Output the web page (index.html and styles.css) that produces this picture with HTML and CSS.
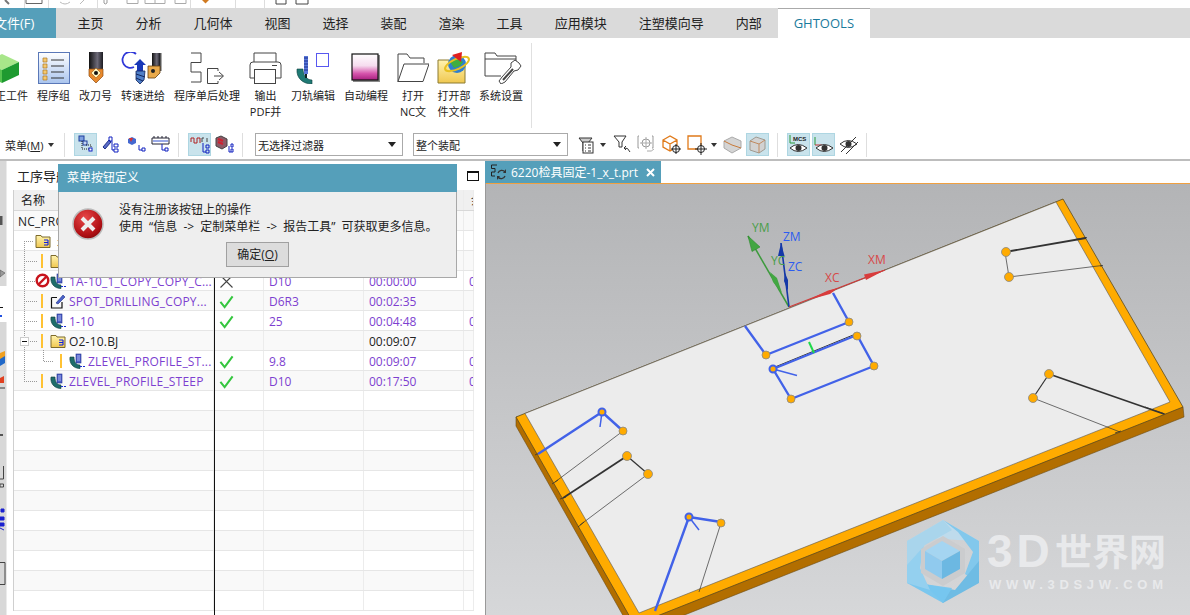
FILE: index.html
```html
<!DOCTYPE html>
<html lang="zh-CN">
<head>
<meta charset="utf-8">
<title>GHTOOLS</title>
<link rel="stylesheet" href="styles.css">
</head>
<body>
<svg class="sprite" width="0" height="0">
<defs>
<linearGradient id="gList" x1="0" y1="0" x2="0" y2="1"><stop offset="0" stop-color="#fff"/><stop offset="1" stop-color="#a9c4ee"/></linearGradient>
<linearGradient id="gTool" x1="0" y1="0" x2="1" y2="0"><stop offset="0" stop-color="#111"/><stop offset=".6" stop-color="#6d6a78"/><stop offset="1" stop-color="#1a1a20"/></linearGradient>
<linearGradient id="gPink" x1="0" y1="0" x2="0" y2="1"><stop offset="0" stop-color="#fff"/><stop offset=".45" stop-color="#f6dcef"/><stop offset=".75" stop-color="#d655ac"/><stop offset="1" stop-color="#a81f80"/></linearGradient>
<linearGradient id="gFolder" x1="0" y1="0" x2="0" y2="1"><stop offset="0" stop-color="#fff3b0"/><stop offset="1" stop-color="#f0c850"/></linearGradient>
<radialGradient id="gErr" cx=".4" cy=".3" r=".8"><stop offset="0" stop-color="#e8484a"/><stop offset=".7" stop-color="#b01014"/><stop offset="1" stop-color="#7a0508"/></radialGradient>
<linearGradient id="gView" x1="0" y1="0" x2="0" y2="1"><stop offset="0" stop-color="#b3b4b6"/><stop offset="1" stop-color="#d6d7d9"/></linearGradient>
<symbol id="opIcon" viewBox="0 0 16 16">
<path d="M1 4 C0 10 4 15.500 11 15.500 L11 12 C7 12 5 9 5 4Z" fill="#1f6d6a" stroke="#0d3b3a" stroke-width=".6"/>
<rect x="7" y="1" width="5" height="9" fill="#5060c8" stroke="#1d2f8c" stroke-width=".6"/>
<path d="M8 3h3M8 5h3M8 7h3" stroke="#cfd8ff" stroke-width=".7"/>
<path d="M11 13.500h5" stroke="#1a2fd0" stroke-width="1.200" stroke-dasharray="2 1"/>
</symbol>
<symbol id="drillIcon" viewBox="0 0 16 16">
<path d="M1.500 4.500H7M1.500 4.500V15H12V9" fill="none" stroke="#111" stroke-width="1.200"/>
<path d="M6 10 L13 2 L15 4 L8 11Z" fill="#4a62c8" stroke="#1f2f88" stroke-width=".6"/>
</symbol>
<symbol id="folderIcon" viewBox="0 0 16 16">
<path d="M1 2.500H6L7 4H15V14.500H1Z" fill="url(#gFolder)" stroke="#7d6a2a"/>
<path d="M9 7h4M9 9.500h4M9 12h4M13 7v5" stroke="#1020e0" stroke-width="1.100" fill="none"/>
</symbol>
<symbol id="check" viewBox="0 0 16 16"><path d="M1.500 8.500 L6 14 L14.500 2.500" fill="none" stroke="#35c63f" stroke-width="2.200"/></symbol>
<symbol id="tree" viewBox="0 0 23 23">
<rect x="5" y="3" width="5" height="5" fill="#7da0e0" stroke="#1f3f9c"/>
<rect x="9" y="8" width="4" height="4" fill="#c4d4f0" stroke="#1f3f9c"/>
<path d="M8 8v8h7M12 12h5v6" fill="none" stroke="#222" stroke-dasharray="1 1"/>
<rect x="15" y="15" width="3" height="3" fill="#fff" stroke="#1020c0"/>
</symbol>
</defs>
</svg>

<div class="app">
  <div class="quick">
    <svg class="quick-icons" width="320" height="8" viewBox="0 0 320 8">
      <path d="M5 0l4 4" stroke="#777" stroke-width="2"/>
      <path d="M24.500 0v8M48.500 0v8M97.500 0v8M190.500 0v8M235.500 0v8M264.500 0v8" stroke="#ddd"/>
      <path d="M26 0v3.500h16V0" fill="none" stroke="#666"/>
      <path d="M60 2q5 4 10 0M80 4l4-4" fill="none" stroke="#bbb"/>
      <path d="M104 0v3q1 2 3 0V0" fill="none" stroke="#999"/>
      <path d="M127 0v3.500h11V0M145 0v3.500h20V0M155 0v3.500M175 0v3.500h11V0" fill="none" stroke="#aaa"/>
      <path d="M202 0h7l-3.500 3.500z" fill="#d07a20"/>
      <path d="M276 0v4h10V0M296 0v4h12V0" fill="none" stroke="#444"/>
    </svg>
  </div>

  <nav class="tabs">
    <div class="tab tab-file">文件(F)</div>
    <div class="tab tab-first">主页</div>
    <div class="tab">分析</div>
    <div class="tab">几何体</div>
    <div class="tab">视图</div>
    <div class="tab">选择</div>
    <div class="tab">装配</div>
    <div class="tab">渲染</div>
    <div class="tab">工具</div>
    <div class="tab">应用模块</div>
    <div class="tab">注塑模向导</div>
    <div class="tab">内部</div>
    <div class="tab tab-active">GHTOOLS</div>
  </nav>

  <section class="ribbon">
    <div class="rb-group">
      <div class="rb-item rb-lead">
        <svg class="rb-icon" width="38" height="32" viewBox="4 0 38 32">
          <path d="M19 2L36 10 19 18 2 10Z" fill="#a8e68a"/>
          <path d="M2 10L19 18V31L2 23Z" fill="#55c34f"/>
          <path d="M36 10L19 18V31L36 23Z" fill="#1e9a30"/>
        </svg>
        <span>校正工件</span>
      </div>
      <div class="rb-item">
        <svg class="rb-icon" width="32" height="32" viewBox="0 0 32 32">
          <rect x=".5" y=".5" width="31" height="31" fill="url(#gList)" stroke="#5a78b8"/>
          <path d="M5 6h4v4H5zM5 12h4v4H5zM5 18h4v4H5zM5 24h4v4H5z" fill="#f4c870" stroke="#b07a20" stroke-width=".7"/>
          <path d="M13 8h13M13 14h13M13 20h13M13 26h13" stroke="#333"/>
        </svg>
        <span>程序组</span>
      </div>
      <div class="rb-item">
        <svg class="rb-icon" width="32" height="32" viewBox="0 0 32 32">
          <rect x="9" y="0" width="14" height="17" fill="url(#gTool)"/>
          <path d="M9 17H23V24L16 31 9 24Z" fill="#e8892c" stroke="#8c4b10" stroke-width=".7"/>
          <path d="M16 16l5 5-5 5-5-5z" fill="#fff4c0" stroke="#a05a10" stroke-width=".6"/>
          <circle cx="16" cy="21" r="2" fill="#111"/>
        </svg>
        <span>改刀号</span>
      </div>
      <div class="rb-item">
        <svg class="rb-icon" width="44" height="32" viewBox="0 0 44 32">
          <path d="M15 2A8 8 0 1 0 13 15" fill="none" stroke="#3038d8" stroke-width="1.800"/>
          <path d="M19 7l6 6h-3v6h-6v-6h-3z" fill="#1838b8"/>
          <path d="M15 19h9l-1 9-4 4-4-4z" fill="#4f7fc8" stroke="#12245c" stroke-width=".8"/>
          <path d="M15 22l9 3M15 26l7 3" stroke="#12245c"/>
          <rect x="31" y="1" width="8" height="13" fill="url(#gTool)"/>
          <rect x="39" y="1" width="1.500" height="18" fill="#555"/>
          <path d="M27 14h12v7l-5 5h-7z" fill="#e9a94a" stroke="#664010" stroke-width=".8"/>
          <circle cx="32" cy="19" r="2" fill="#222"/>
        </svg>
        <span>转速进给</span>
      </div>
      <div class="rb-item">
        <svg class="rb-icon" width="66" height="32" viewBox="0 0 66 32">
          <path d="M17 1H27V10.500H17V20H27V30H17" fill="none" stroke="#444"/>
          <path d="M44 16.500H33.500V31.500H44M44 16.500V19M44 31.500V29" fill="none" stroke="#444"/>
          <path d="M40 24H49M45 20L49.500 24 45 28" fill="none" stroke="#444"/>
        </svg>
        <span>程序单后处理</span>
      </div>
      <div class="rb-item rb-print">
        <svg class="rb-icon" width="33" height="32" viewBox="0 0 33 32">
          <path d="M5 10V1H27V10" fill="none" stroke="#444"/>
          <path d="M6 26H1V13Q1 10 4 10H29Q32 10 32 13V26H27" fill="none" stroke="#444"/>
          <rect x="5.500" y="17.500" width="21" height="14" fill="#fff" stroke="#444"/>
          <path d="M23 13.500H28" stroke="#444"/>
        </svg>
        <span>输出<br>PDF并</span>
      </div>
      <div class="rb-item">
        <svg class="rb-icon" width="44" height="32" viewBox="0 0 44 32">
          <rect x="25.500" y="1.500" width="12" height="13" fill="#fff" stroke="#5858f0"/>
          <path d="M6 17C5 26 12 32 21 32L21 28C15 28 12 22 12 17Z" fill="#1f7a74" stroke="#0d4240" stroke-width=".6"/>
          <rect x="13" y="4" width="4" height="18" fill="#5a78d8"/>
          <path d="M13 6h4M13 9h4M13 12h4M13 15h4M13 18h4" stroke="#1a2f90"/>
          <path d="M14 22h2v4h-2z" fill="#122"/>
        </svg>
        <span>刀轨编辑</span>
      </div>
      <div class="rb-item">
        <svg class="rb-icon" width="44" height="32" viewBox="0 0 44 32">
          <rect x="9" y="3" width="27" height="27" fill="#8a8a8a"/>
          <rect x="8" y="2" width="26" height="26" fill="url(#gPink)" stroke="#111" stroke-width="1.200"/>
        </svg>
        <span>自动编程</span>
      </div>
      <div class="rb-item">
        <svg class="rb-icon" width="32" height="32" viewBox="0 0 32 32">
          <path d="M1 30V2H10L13 6H27V11" fill="none" stroke="#444"/>
          <path d="M1 29.500H26L32 12H7Z" fill="#fff" stroke="#444"/>
        </svg>
        <span>打开<br>NC文</span>
      </div>
      <div class="rb-item rb-tight">
        <svg class="rb-icon" width="34" height="32" viewBox="0 0 34 32">
          <path d="M1 31V8H12L14 11H28V31Z" fill="url(#gFolder)" stroke="#8c7a30"/>
          <circle cx="20" cy="12" r="9" fill="#2f7fcf"/>
          <path d="M13 10q7-6 13 0l-3 4-6 2z" fill="#3fae3f"/>
          <ellipse cx="20" cy="12" rx="13" ry="5" transform="rotate(-25 20 12)" fill="none" stroke="#e8c020" stroke-width="2"/>
          <path d="M15 3L25 0 24 10Z" fill="#e02020"/>
        </svg>
        <span>打开部<br>件文件</span>
      </div>
      <div class="rb-item rb-tight">
        <svg class="rb-icon" width="44" height="32" viewBox="0 0 44 32">
          <path d="M6 24V1H16L18 4H37V15M6 24H22" fill="none" stroke="#444"/>
          <path d="M6 7H37" stroke="#444"/>
          <path d="M40 11L36 8 32 11 32 15 23 25 20 29 22 32 26 30 35 19 39 18 42 14Z" fill="#fff" stroke="#444"/>
          <path d="M24 28L34 17" stroke="#444" stroke-width="2"/>
        </svg>
        <span>系统设置</span>
      </div>
    </div>
    <div class="rb-sep"></div>
  </section>

  <section class="toolbar">
    <div class="menu"><span>菜单(<u>M</u>)</span><i class="caret"></i></div>
    <div class="sep"></div>
    <div class="btn active"><svg width="23" height="23"><use href="#tree"/></svg></div>
    <div class="btn"><svg width="23" height="23" viewBox="0 0 23 23"><path d="M4 14l6-7 2 2-6 7z" fill="#5a6cc8" stroke="#1f2f88"/><path d="M10 4h3v4h-3zM15 11h4v3h-4zM15 16h4v3h-4zM13 8v9h2" fill="none" stroke="#1020c0"/></svg></div>
    <div class="btn"><svg width="23" height="23" viewBox="0 0 23 23"><path d="M4 6l4-2 4 2v4l-4 2-4-2z" fill="#4468d0"/><path d="M5 5h4l-2 4z" fill="#d83030"/><path d="M15 12v5h3M18 15h3v3h-3z" fill="none" stroke="#1020c0"/></svg></div>
    <div class="btn"><svg width="23" height="23" viewBox="0 0 23 23"><path d="M3 5h17M3 5v6h17V5M5 3v2M9 3v2M13 3v2M17 3v2" fill="none" stroke="#223"/><path d="M4 8h15" stroke="#3050d0"/><path d="M13 11v6h3M16 15h3v3h-3z" fill="none" stroke="#1020c0"/></svg></div>
    <div class="sep"></div>
    <div class="btn active"><svg width="23" height="23" viewBox="0 0 23 23"><path d="M3 9V5h3v5h3V5h3v5" fill="none" stroke="#b02020"/><path d="M14 9V5h2M19 5v4" fill="none" stroke="#444"/><path d="M15 10v9h3M18 12h3v3h-3zM18 17h3v3h-3z" fill="none" stroke="#1020c0"/></svg></div>
    <div class="btn"><svg width="23" height="23" viewBox="0 0 23 23"><path d="M3 5l5-2 6 3v7l-5 3-6-3z" fill="#8c5a66" stroke="#444"/><path d="M5 6l5 2M5 9l5 2" stroke="#d02030" stroke-width="2"/><path d="M16 13v6h2M18 11h2v3h-2zM18 16h2v3h-2z" fill="none" stroke="#1020c0"/></svg></div>
    <div class="sep"></div>
    <div class="select select-a"><span>无选择过滤器</span><i class="caret caret-dark"></i></div>
    <div class="select select-b"><span>整个装配</span><i class="caret caret-dark"></i></div>
    <div class="btn btn-after"><svg width="23" height="23" viewBox="0 0 23 23"><path d="M5 5h13l-4 5v8h-5V10z" fill="#ccc" stroke="#333"/><rect x="9" y="9" width="10" height="11" fill="#fff" stroke="#333"/><path d="M11 12h1M14 12h3M11 15h1M14 15h3M11 18h1M14 18h3" stroke="#333"/></svg></div>
    <i class="caret mini"></i>
    <div class="btn"><svg width="23" height="23" viewBox="0 0 23 23"><path d="M4 3h12l-4 6v5h-3V9z" fill="#fff" stroke="#333"/><path d="M20 19q-2-5-6-4M14 15l2-2M14 15l2 2" fill="none" stroke="#333"/></svg></div>
    <div class="btn dim"><svg width="23" height="23" viewBox="0 0 23 23"><path d="M4 3h-1v12h1M17 3h1v12h-1" fill="none" stroke="#999"/><circle cx="11" cy="10" r="4" fill="none" stroke="#999"/><path d="M11 4v12M5 10h12M12 18q5 1 7-2" fill="none" stroke="#aaa"/></svg></div>
    <div class="btn"><svg width="23" height="23" viewBox="0 0 23 23"><path d="M3 7l7-4 7 4v7l-7 4-7-4zM3 7l7 4 7-4M10 11v7" fill="none" stroke="#e07a1a" stroke-width="1.300"/><circle cx="16" cy="16" r="3.500" fill="#fff" stroke="#222"/><path d="M16 11v10M11 16h10" stroke="#222"/></svg></div>
    <div class="btn"><svg width="23" height="23" viewBox="0 0 23 23"><path d="M3 3h13v13H3z" fill="none" stroke="#e07a1a" stroke-width="1.300"/><circle cx="16" cy="16" r="3.500" fill="#fff" stroke="#222"/><path d="M16 10v12M10 16h12" stroke="#222"/></svg></div>
    <i class="caret mini"></i>
    <div class="btn"><svg width="23" height="23" viewBox="0 0 23 23"><path d="M3 8l8-4 9 4v7l-9 5-8-5z" fill="#d4d4d4" stroke="#aaa"/><path d="M3 8l8 4 9 3" fill="none" stroke="#c87a3a"/></svg></div>
    <div class="btn active"><svg width="23" height="23" viewBox="0 0 23 23"><path d="M4 8l6-4 9 3v9l-6 4-9-3z" fill="#d2d2d2" stroke="#a09a90"/><path d="M4 8l9 3v9M13 11l6-4" fill="none" stroke="#c08a60"/></svg></div>
    <div class="sep sep-wide"></div>
    <div class="btn active"><svg width="23" height="23" viewBox="0 0 23 23"><text class="mcs" x="6" y="8">MCS</text><path d="M3 2v8h5" fill="none" stroke="#2a9a3a"/><path d="M3 15q8-7 17 0q-9 7-17 0z" fill="#fff" stroke="#333"/><circle cx="11.500" cy="15" r="3" fill="#333"/></svg></div>
    <div class="btn active"><svg width="23" height="23" viewBox="0 0 23 23"><path d="M3 4v8" stroke="#2a9a3a"/><path d="M3 12h7" stroke="#c03030"/><path d="M4 15q8-7 17 0q-9 7-17 0z" fill="#fff" stroke="#333"/><circle cx="12.500" cy="15" r="3" fill="#333"/></svg></div>
    <div class="btn"><svg width="23" height="23" viewBox="0 0 23 23"><path d="M3 11q8-7 17 0q-9 7-17 0z" fill="#fff" stroke="#333"/><circle cx="11.500" cy="11" r="3" fill="#333"/><path d="M4 19L19 4M9 21L21 9" stroke="#333"/></svg></div>
    <div class="sep"></div>
  </section>

  <main class="main">
    <svg class="strip" width="7" height="455" viewBox="0 160 7 455">
      <rect x="0" y="160" width="6.500" height="125" fill="#d8d8d8"/>
      <rect x="0" y="321" width="6.500" height="294" fill="#d8d8d8"/>
      <path d="M0 215h2.500v9H0zM0 433h3v2H0z" fill="#555"/>
      <path d="M0 269l5 3-5 4z" fill="#999" stroke="#555" stroke-width=".6"/>
      <path d="M0 306.500h3" stroke="#111"/>
      <path d="M0 315h2" stroke="#2050e0" stroke-width="2"/>
      <path d="M0 352l5-2v9l-5 2z" fill="#f0a020"/><path d="M0 358l5-3v7l-5 3z" fill="#2068c8"/>
      <path d="M0 377l4-2v7h-4z" fill="#e04020"/><path d="M0 387h5" stroke="#888" stroke-width="2"/>
      <path d="M3.500 465v13M0 478h3.500M0 483h3.500v3H0z" fill="none" stroke="#444"/>
      <path d="M1 508h3v3H1zM0 516h4v3H0zM0 522h4v3H0zM0 527l4 2" fill="#1a20d0" stroke="#1a20d0"/>
      <path d="M0 561.500h5v22H0" fill="none" stroke="#444"/>
    </svg>

    <aside class="nav">
      <div class="nav-title"><span>工序导航器</span><i class="nav-max"></i></div>
      <div class="table">
        <div class="head">
          <div class="cell">名称</div><div class="cell"></div><div class="cell"></div><div class="cell"></div><div class="cell">余</div>
        </div>
        <div class="row">
          <div class="cell name root"><span>NC_PROGRAM</span></div><div class="cell"></div><div class="cell"></div><div class="cell"></div><div class="cell"></div>
        </div>
        <div class="row">
          <div class="cell name group"><svg class="ico" width="16" height="16"><use href="#folderIcon"/></svg><span>未用项</span></div><div class="cell"></div><div class="cell"></div><div class="cell"></div><div class="cell"></div>
        </div>
        <div class="row">
          <div class="cell name lv1"><i class="mark"><b class="warn"></b></i><svg class="ico" width="16" height="16"><use href="#folderIcon"/></svg><span>1A-10</span></div><div class="cell"></div><div class="cell"></div><div class="cell"></div><div class="cell"></div>
        </div>
        <div class="row purple">
          <div class="cell name lv1"><i class="mark"><svg width="15" height="15" viewBox="0 0 15 15"><circle cx="7.500" cy="7.500" r="5.800" fill="#fff" stroke="#c8141c" stroke-width="2.400"/><path d="M3.500 11.500l8-8" stroke="#c8141c" stroke-width="2.400"/></svg></i><svg class="ico" width="16" height="16"><use href="#opIcon"/></svg><span>1A-10_1_COPY_COPY_C...</span></div>
          <div class="cell"><svg width="15" height="15" viewBox="0 0 15 15" class="mid"><path d="M1.500 1.500l12 12M13.500 1.500l-12 12" stroke="#444" stroke-width="1.100"/></svg></div><div class="cell">D10</div><div class="cell">00:00:00</div><div class="cell">0</div>
        </div>
        <div class="row purple">
          <div class="cell name lv1"><i class="mark"><b class="warn"></b></i><svg class="ico" width="16" height="16"><use href="#drillIcon"/></svg><span>SPOT_DRILLING_COPY...</span></div>
          <div class="cell"><svg class="mid" width="15" height="15"><use href="#check"/></svg></div><div class="cell">D6R3</div><div class="cell">00:02:35</div><div class="cell"></div>
        </div>
        <div class="row purple">
          <div class="cell name lv1"><i class="mark"><b class="warn"></b></i><svg class="ico" width="16" height="16"><use href="#opIcon"/></svg><span>1-10</span></div>
          <div class="cell"><svg class="mid" width="15" height="15"><use href="#check"/></svg></div><div class="cell">25</div><div class="cell">00:04:48</div><div class="cell">0</div>
        </div>
        <div class="row">
          <div class="cell name lv1"><i class="mark"><b class="warn"></b></i><svg class="ico" width="16" height="16"><use href="#folderIcon"/></svg><span>O2-10.BJ</span></div>
          <div class="cell"></div><div class="cell"></div><div class="cell">00:09:07</div><div class="cell"></div>
        </div>
        <div class="row purple">
          <div class="cell name lv2"><i class="mark"><b class="warn"></b></i><svg class="ico" width="16" height="16"><use href="#opIcon"/></svg><span>ZLEVEL_PROFILE_ST...</span></div>
          <div class="cell"><svg class="mid" width="15" height="15"><use href="#check"/></svg></div><div class="cell">9.8</div><div class="cell">00:09:07</div><div class="cell">0</div>
        </div>
        <div class="row purple">
          <div class="cell name lv1"><i class="mark"><b class="warn"></b></i><svg class="ico" width="16" height="16"><use href="#opIcon"/></svg><span>ZLEVEL_PROFILE_STEEP</span></div>
          <div class="cell"><svg class="mid" width="15" height="15"><use href="#check"/></svg></div><div class="cell">D10</div><div class="cell">00:17:50</div><div class="cell">0</div>
        </div>
        <div class="row"><i></i><i></i><i></i><i></i><i></i></div>
        <div class="row"><i></i><i></i><i></i><i></i><i></i></div>
        <div class="row"><i></i><i></i><i></i><i></i><i></i></div>
        <div class="row"><i></i><i></i><i></i><i></i><i></i></div>
        <div class="row"><i></i><i></i><i></i><i></i><i></i></div>
        <div class="row"><i></i><i></i><i></i><i></i><i></i></div>
        <div class="row"><i></i><i></i><i></i><i></i><i></i></div>
        <div class="row"><i></i><i></i><i></i><i></i><i></i></div>
        <div class="row"><i></i><i></i><i></i><i></i><i></i></div>
        <div class="row"><i></i><i></i><i></i><i></i><i></i></div>
        <div class="row"><i></i><i></i><i></i><i></i><i></i></div>
        <svg class="tree-lines" width="60" height="210" viewBox="14 190 60 210">
          <path class="dots" d="M24.500 241V381M24 241.500H34M24 261.500H38M24 281.500H35M24 301.500H38M24 321.500H38M28 341.500H37M43.500 350V361.500H53M24 381.500H38"/>
          <rect x="20.500" y="337.500" width="8" height="8" fill="#fff" stroke="#ccc"/>
          <path d="M22 341.500h5" stroke="#111"/>
        </svg>
        <i class="col-line"></i>
      </div>
    </aside>

    <section class="view">
      <div class="view-tabs">
        <div class="view-tab">
          <svg width="17" height="17" viewBox="0 0 17 17"><path d="M7 1H1.500V4.500H5V8H1.500V12H5" fill="none" stroke="#222" stroke-width="1"/><path d="M8 9a4 4 0 0 1 7-1M15 12a4 4 0 0 1-7 1" fill="none" stroke="#333" stroke-width="1.300"/><path d="M16 5v4h-3zM7 16v-4h3z" fill="#333"/></svg>
          <span>6220检具固定-1_x_t.prt</span>
          <svg class="view-close" width="9" height="9" viewBox="0 0 9 9"><path d="M1 1l7 7M8 1l-7 7" stroke="#fff" stroke-width="2"/></svg>
        </div>
      </div>
      <svg class="canvas" width="705" height="432" viewBox="485 183 705 432">
        <rect x="485" y="183" width="705" height="432" fill="url(#gView)"/>
        <path d="M485 183.500H1190" stroke="#f0a040"/>
        <path d="M485.500 183V615" stroke="#999"/>

        <!-- plate -->
        <path d="M516 417V426L634 635 1184 417 1183 407Z" fill="#b26e00" stroke="#6a4a10" stroke-width=".6"/>
        <path d="M516 417L1063 199 1183 407 634.500 625Z" fill="#ffab00" stroke="#5a4a20" stroke-width=".8"/>
        <path d="M525 413.500L1056 202 1170 402 639 613Z" fill="#ececec" stroke="#555" stroke-width=".6"/>

        <!-- right features -->
        <g fill="none" stroke="#333">
          <path d="M1005 252L1086 238" stroke-width="1.800"/>
          <path d="M1009 277L1102 265.500" stroke-width=".7"/>
          <path d="M1005 252L1009 277" stroke-width=".7"/>
          <path d="M1049 374L1164 414" stroke-width="1.800"/>
          <path d="M1033 398L1120 432" stroke-width=".7"/>
          <path d="M1049 374L1033 398" stroke-width="1.200"/>
          <path d="M627 456L563 498" stroke-width="1.800"/>
          <path d="M648 474L580 525" stroke-width=".7"/>
          <path d="M627 456L648 474" stroke-width="1.200"/>
          <path d="M623 431L555 482" stroke-width=".7"/>
          <path d="M721 523L699 592" stroke-width=".7"/>
          <path d="M775 367L858 333" stroke-width="1" />
          <path d="M1075 239.500L1087 237.500M1100 266L1103 265.500M1115 433L1121 431M1145 407L1165 414" stroke-width=".8"/>
          <path d="M560 499L566 497M552 484L558 480M535 455L543 451M578 527L584 522" stroke-width=".8"/>
        </g>

        <!-- blue toolpaths -->
        <g fill="none" stroke="#4262e8" stroke-width="2.400" stroke-linejoin="round">
          <path d="M745 326L766 355 849 322 833 293"/>
          <path d="M773 369L857 335 874 366 791 399Z"/>
          <path d="M538 454L602 412 623 431"/>
          <path d="M655 611L689 517 721 522"/>
          <path d="M773 369L797 375.500" stroke-width="1.500"/>
          <path d="M602 412L600 427" stroke-width="1.500"/>
          <path d="M689 517L699 530" stroke-width="1.500"/>
        </g>
        <path d="M809 342L814 353" stroke="#1fd84a" stroke-width="2"/>

        <!-- points -->
        <g fill="#ffab00" stroke="#888" stroke-width=".8">
          <circle cx="1006" cy="252" r="4.500"/><circle cx="1009" cy="277" r="4.500"/>
          <circle cx="1049" cy="374" r="4.500"/><circle cx="1033" cy="398" r="4.500"/>
          <circle cx="766" cy="355" r="4"/><circle cx="849" cy="322" r="4"/>
          <circle cx="857" cy="336" r="4"/><circle cx="874" cy="366" r="4"/>
          <circle cx="791" cy="399" r="4"/><circle cx="623" cy="431" r="4"/>
          <circle cx="627" cy="456" r="4.500"/><circle cx="648" cy="474" r="4.500"/>
          <circle cx="721" cy="523" r="4"/>
        </g>
        <g fill="#ffab00" stroke="#4262e8" stroke-width="2">
          <circle cx="602" cy="412" r="3.500"/><circle cx="689" cy="517" r="3.500"/><circle cx="773" cy="369" r="3.500"/>
        </g>

        <!-- triad -->
        <path d="M789 307L748 236" stroke="#3c9a3c" stroke-width="1.500"/>
        <path d="M748 236L760 247 752 251.500Z" fill="#42a642" stroke="#2f8a2f" stroke-width=".6"/>
        <path d="M770 272L777 278 782 293 773 282Z" fill="#42a642"/>
        <path d="M789 307L781 243" stroke="#1438a8" stroke-width="1.600"/>
        <path d="M781 243L784.500 256 778 256Z" fill="#1438a8"/>
        <path d="M785 273L788 280 788 291 784 281Z" fill="#1438a8"/>
        <path d="M789 307L885 270" stroke="#d23a3a" stroke-width="1.300"/>
        <path d="M808 300L828 290.500 838 288 830 294Z" fill="#d83c3c"/>
        <path d="M885 270L864 274.500 866 280Z" fill="#d83c3c"/>
        <text class="axis axis-green" x="752" y="232">YM</text>
        <text class="axis axis-green" x="771" y="265">YC</text>
        <text class="axis axis-blue" x="783" y="241">ZM</text>
        <text class="axis axis-blue" x="788" y="271">ZC</text>
        <text class="axis axis-red" x="825" y="282">XC</text>
        <text class="axis axis-red" x="868" y="264">XM</text>

        <!-- watermark -->
        <g>
          <path d="M943 520L979 541 958 540 930 538 907 541Z" fill="#bedbec"/>
          <path d="M943 520L979 541V583L965 574 973 552 958 532Z" fill="#82c8ec"/>
          <path d="M979 561V583L943 603 924 584 955 590Z" fill="#6fbce4"/>
          <path d="M943 603L907 583 V572 L924 584 952 588Z" fill="#76c6ef" opacity=".95"/>
          <path d="M907 583V541L925 538 920 568 930 590Z" fill="#94d0ef"/>
          <path d="M907 541L943 520 952 530 925 545 907 565Z" fill="#a9d5ec"/>
          <path d="M943 536L965 549V573L943 586 921 573V549Z" fill="#cbccce"/>
          <path d="M942 541L960 551 942 561 925 551Z" fill="#a5d5f1"/>
          <path d="M925 551L942 561V579L925 569Z" fill="#90caee"/>
          <path d="M960 551L942 561V579L960 569Z" fill="#6cb8e2"/>
        </g>
        <text class="wm-title" x="987" y="567"><tspan class="wm-latin">3D</tspan><tspan x="1055" y="566">世界网</tspan></text>
        <text class="wm-url" x="989" y="589" textLength="174" lengthAdjust="spacing">WWW.3DSJW.COM</text>
      </svg>
    </section>
  </main>

  <div class="dialog">
    <div class="dlg-title">菜单按钮定义</div>
    <div class="dlg-body">
      <div class="dlg-msg">
        <svg class="dlg-icon" width="32" height="32" viewBox="0 0 32 32">
          <circle cx="16" cy="16" r="15" fill="url(#gErr)" stroke="#bbb" stroke-width="1.500"/>
          <path d="M10 10l12 12M22 10l-12 12" stroke="#eee" stroke-width="4"/>
        </svg>
        <p>没有注册该按钮上的操作<br>使用 “信息 -&gt; 定制菜单栏 -&gt; 报告工具” 可获取更多信息。</p>
      </div>
      <div class="dlg-btn">确定(<u>O</u>)</div>
    </div>
  </div>
</div>
</body>
</html>
```

FILE: styles.css
```css
* { box-sizing: border-box; }
html, body { margin: 0; padding: 0; background: #fff; }
body {
  font-family: "Open Sans", "Noto Sans CJK SC", sans-serif;
  font-size: 12px;
  color: #222;
}
.sprite { position: absolute; }
.app {
  position: relative;
  width: 1190px;
  height: 615px;
  overflow: hidden;
  display: flex;
  flex-direction: column;
  background: #fff;
}

/* quick access strip */
.quick { height: 8px; overflow: hidden; }
.quick-icons { display: block; }

/* ribbon tabs */
.tabs {
  height: 30px;
  background: #dadada;
  display: flex;
  font-size: 13px;
  line-height: 30px;
}
.tab { padding: 0 16px; white-space: nowrap; color: #222; }
.tab-file {
  width: 62px;
  margin-left: -6px;
  padding: 0;
  background: #559fba;
  color: #fff;
}
.tab-first { margin-left: 5.5px; }
.tab-active {
  background: #fff;
  color: #1a7a9c;
  border-top: 1px solid #aaa;
  line-height: 28px;
}

/* ribbon */
.ribbon { height: 92px; display: flex; padding-top: 5px; }
.rb-group { width: 531px; display: flex; gap: 9px; padding-top: 9px; font-size: 11px; line-height: 16px; }
.rb-item { display: flex; flex-direction: column; align-items: center; text-align: center; white-space: nowrap; }
.rb-icon { display: block; margin-bottom: 4px; }
.rb-lead { margin-left: -16px; }
.rb-print { width: 33px; }
.rb-tight { margin-left: -1px; }
.rb-sep { width: 1px; height: 85px; background: #e0e0e0; }

/* toolbar */
.toolbar {
  height: 31px;
  padding: 4px 0 4px 5px;
  display: flex;
  align-items: center;
  gap: 2px;
  border-bottom: 2px solid #bdbdbd;
}
.menu { width: 53px; display: flex; align-items: center; gap: 5px; white-space: nowrap; font-size: 11px; }
.caret { display: block; width: 0; height: 0; border: 3px solid transparent; border-top: 4px solid #333; border-bottom: 0; }
.caret-dark { border-width: 4px; border-top-width: 5px; border-top-color: #222; border-bottom: 0; }
.mini { margin: 0 2px 0 1px; }
.sep { width: 1px; height: 24px; background: #dedede; margin: 0 7px 0 4px; }
.sep-wide { margin-left: 6px; }
.btn { width: 23px; height: 23px; flex: none; }
.btn svg { display: block; }
.btn.active { background: #c9e3ec; outline: 1px solid #aed6e2; outline-offset: -1px; }
.btn-after { margin-left: 4px; }
.select {
  height: 23px;
  border: 1px solid #aaa;
  background: #fff;
  display: flex;
  align-items: center;
  justify-content: space-between;
  padding: 0 6px 0 2px;
  font-size: 11px;
  flex: none;
}
.select-a { width: 148px; margin-left: 3px; }
.select-b { width: 155px; margin-left: 8px; }
.mcs { font-family: "Liberation Sans", sans-serif; font-size: 6px; font-weight: 700; fill: #222; }

/* main */
.main { flex: 1; min-height: 0; display: flex; }
.strip { display: block; flex: none; }
.nav { width: 478px; flex: none; padding-left: 6px; overflow: hidden; }
.nav-title {
  height: 29px;
  display: flex;
  align-items: center;
  justify-content: space-between;
  padding: 0 6px 0 4px;
  font-size: 13px;
}
.nav-max { display: block; width: 12px; height: 10px; border: 1px solid #111; border-top-width: 2px; }
.table { position: relative; width: 461px; border-left: 1px solid #cfcfcf; }
.head, .row {
  display: grid;
  grid-template-columns: 200px 50px 100px 100px 10px;
  height: 20px;
  line-height: 19px;
  border-bottom: 1px solid #e6e6e6;
}
.head { height: 21px; background: #f0f0f0; line-height: 20px; border-bottom-color: #d8d8d8; }
.head .cell { padding-left: 7px; font-size: 12px; padding-top: 1px; }
.row:nth-child(even) { background: #f9f9f9; }
.row > i { display: block; border-right: 1px solid #ececec; }
.cell { min-width: 0; overflow: hidden; white-space: nowrap; padding: 1px 0 0 5px; border-right: 1px solid #ececec; }
.purple .cell { color: #7d3fd0; }
.name { display: flex; align-items: center; padding-left: 20px; padding-top: 0; letter-spacing: .2px; }
.name span { padding-top: 1px; }
.name.root { padding-left: 4px; }
.name.group { padding-left: 21px; gap: 3px; }
.name.lv2 { padding-left: 39px; }
.mark { display: flex; width: 16px; height: 16px; flex: none; align-items: center; justify-content: center; }
.warn { display: block; width: 2px; height: 14px; background: #ffc233; }
.ico { display: block; flex: none; margin-right: 3px; }
.mid { display: block; margin: 2px 0 0 0; }
.tree-lines { position: absolute; left: 0; top: 0; }
.dots { fill: none; stroke: #999; stroke-dasharray: 1 1; }
.col-line { position: absolute; left: 200px; top: 0; width: 1px; height: 430px; background: #111; }

/* view */
.view { flex: 1; min-width: 0; display: flex; flex-direction: column; }
.view-tabs { height: 22px; display: flex; flex: none; }
.view-tab {
  width: 176px;
  background: #559fba;
  color: #fff;
  font-size: 12px;
  display: flex;
  align-items: center;
  padding: 0 6px 0 5px;
  white-space: nowrap;
}
.view-tab span { margin-left: 4px; }
.view-close { margin-left: auto; }
.canvas { display: block; flex: none; }
.axis { font-size: 12px; font-family: "Open Sans", sans-serif; }
.axis-green { fill: #4a9e4a; }
.axis-blue { fill: #2c5cf0; }
.axis-red { fill: #d84848; }
.wm-title { font-size: 37px; font-weight: 700; fill: #e8e9eb; font-family: "Noto Sans CJK SC", sans-serif; }
.wm-latin { font-size: 46px; font-family: "Liberation Sans", sans-serif; letter-spacing: 4px; }
.wm-url { font-size: 13px; font-weight: 700; fill: #e8e9eb; font-family: "Liberation Sans", sans-serif; }

/* dialog */
.dialog {
  position: absolute;
  left: 58px;
  top: 164px;
  width: 399px;
  height: 114px;
  background: #eee;
  border: 1px solid #a8a8a8;
  border-top: 0;
  display: flex;
  flex-direction: column;
}
.dlg-title {
  height: 28px;
  margin: 0 -1px;
  background: #559fba;
  color: #fff;
  font-size: 12px;
  line-height: 28px;
  padding-left: 9px;
}
.dlg-body { flex: 1; display: flex; flex-direction: column; align-items: center; padding-top: 9px; }
.dlg-msg { width: 100%; display: flex; padding-left: 13px; }
.dlg-icon { display: block; margin-top: 7px; flex: none; }
.dlg-msg p { margin: 0 0 0 15px; font-size: 12px; line-height: 17px; white-space: nowrap; word-spacing: 3px; }
.dlg-btn {
  width: 63px;
  height: 25px;
  margin-top: 2px;
  background: #dcdcdc;
  border: 1px solid #a0a0a0;
  text-align: center;
  line-height: 23px;
  font-size: 12px;
}
```
